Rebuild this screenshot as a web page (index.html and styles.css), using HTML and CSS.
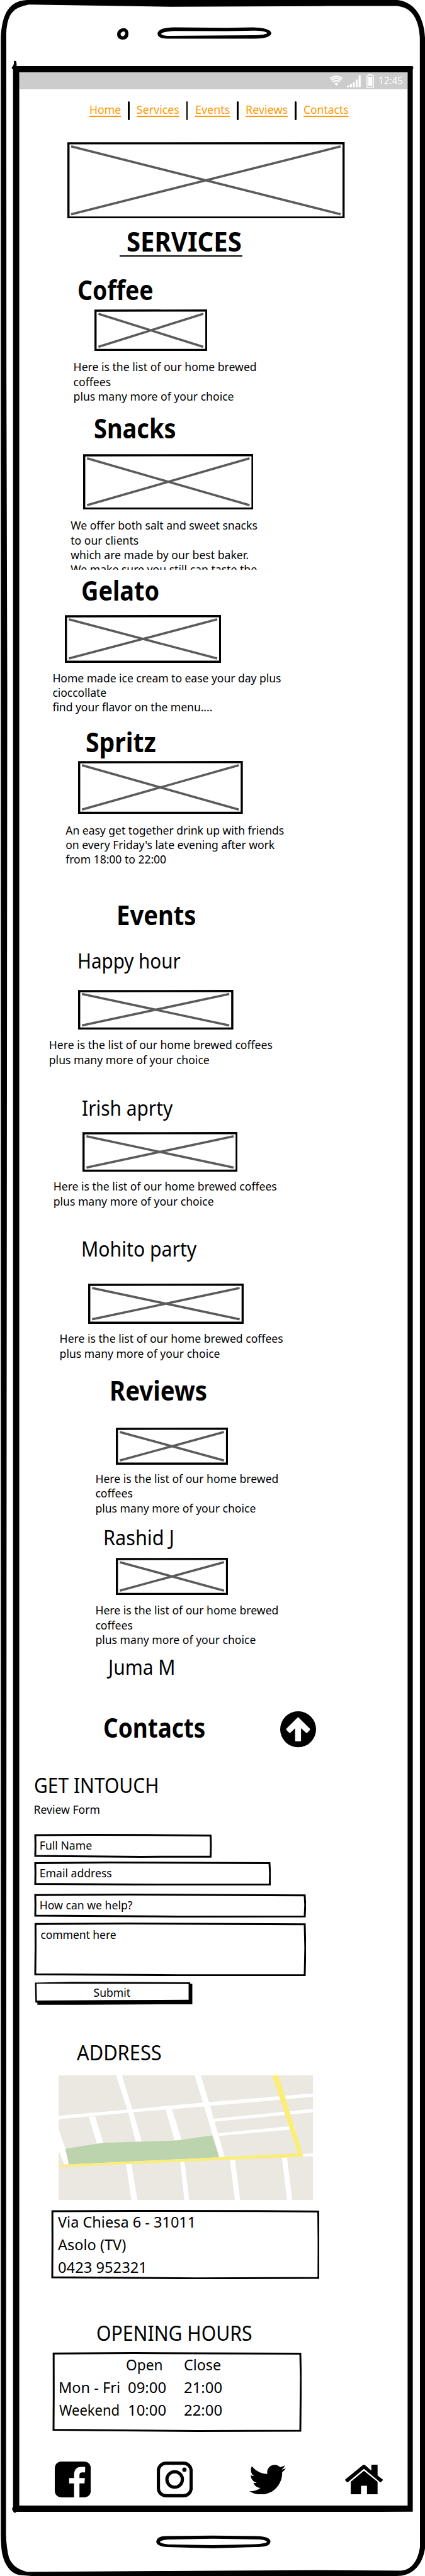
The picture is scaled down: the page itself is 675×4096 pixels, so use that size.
FILE: index.html
```html
<!DOCTYPE html>
<html lang="en">
<head>
<meta charset="utf-8">
<title>Services</title>
<link rel="stylesheet" href="styles.css">
</head>
<body>
<div class="phone">
<svg class="frame" viewBox="0 0 675 4096" aria-hidden="true">
  <path fill-rule="evenodd" d="M43 0H630C655 2 673 22 675 60V4052C671 4078 656 4096 630 4096H50L32 4094.5C15 4092 6 4075 3 4058Q1.5 4048 1.3 4030V60C3 20 16 1 43 0ZM46 7.2C22 12 12 20 10 52L10.2 600L11.5 1100L10.5 2300L9.8 3500L9.6 4030Q10 4050 14 4066C19 4080 30 4086 43 4089.5L270 4088L500 4086.7L637 4087.5C655 4086 664 4070 667 4050L666.8 60C665 25 650 11 630 9.6H520L271 10.8Z"/>
  <path fill-rule="evenodd" d="M20.7 105L22 101.500L22 98Q23.500 95 26 98L26.500 105H655Q657.500 107 655.600 110.500V3993.800L600 3994H26Q23.500 3997 21.500 3994Q17.500 3990 20.700 3986V110.500Q16.500 107.500 20.700 105ZM30.600 114.900V3983.900H647.400V114.900Z"/>
  <path fill-rule="evenodd" d="M280 43.500L360 44.300L402 43.500C424 44 431 49 431 53C430 58 421 61.500 404 61.500H268C253 62 250 57 250.300 53C251 46 263 43.500 280 43.500ZM278 49.300C264 50 256 52 256 54C257 56 262 57 268 57L402 56C416 56 424 54 424.500 52.700C423 50 414 49 402 48.800L360 49.600Z"/>
  <path fill-rule="evenodd" d="M196.500 44.800C201.500 45 204.300 49 204 54C203.600 60 200.500 63 195 63C189 63 186 59.500 186 54C186.300 49 191 45 196.500 44.800ZM196.500 50C193.500 50.500 191.500 52 191.500 54.500C192 57 194 58 195.500 57.700C197.500 57 199 54.500 199 53C198.500 51 198 50 196.500 50Z"/>
  <path fill-rule="evenodd" d="M262 4032.600L338 4031.800L408 4032.600C424 4033 430 4037 429.500 4042C428 4048 422 4050 404 4050L338 4052L266 4050C252 4049 248 4045 248.300 4041C249 4036 253 4033 262 4032.600ZM266 4038C258 4039 254 4040.500 254 4042C256 4044 262 4045.500 270 4045.800L338 4047L404 4045.500C416 4045 424 4043.500 424 4041.500C422 4039 416 4037.800 406 4037.800L338 4036.800Z"/>
</svg>

<div class="screen">
  <div class="statusbar">
    <svg class="wifi" viewBox="0 0 22 17"><path d="M11 16.500L8 13Q11 10.500 14 13Z"/><path class="wave" d="M5.500 10.500Q11 5.800 16.500 10.500M3.300 7.700Q11 1.200 18.700 7.700M1.200 4.800Q11-2 20.800 4.800"/></svg>
    <svg class="signal" viewBox="0 0 22 19"><path d="M0 16h3.200v2.800H0zM4.700 13.500h3.200v5.300H4.700zM9.300 11h3.200v7.800H9.300zM13.900 6.500h3.200v12.300H13.900zM18.600 0h3.200v18.800H18.600z"/></svg>
    <svg class="battery" viewBox="0 0 12 21.500"><path class="shell" d="M3.500 2.200V.8H8.500V2.200H10.200Q11.200 2.200 11.200 3.500V20.700H.8V3.500Q.8 2.200 1.800 2.200Z"/><path d="M2.700 4H9.300V18.800H2.700Z"/></svg>
    <span class="time">12:45</span>
  </div>

  <nav class="nav">
    <a class="l-home">Home</a><i></i><a class="l-services">Services</a><i></i><a class="l-events">Events</a><i></i><a class="l-reviews">Reviews</a><i></i><a class="l-contacts">Contacts</a>
  </nav>

  <svg class="pic hero" viewBox="0 0 440.400 121.700"><path class="x" d="M6 6.800L434 114.800M6 114.800L434 6.800"/><path class="edge" d="M1.700 1.900L438.700 1.700V120H1.700Z"/></svg>
  <div class="title"><h1>SERVICES</h1></div>

  <section class="item coffee">
    <h2>Coffee</h2>
    <svg class="pic" viewBox="0 0 179.500 66.100"><path class="x" d="M6.300 7L172.800 59.500M6.300 59.500L172.800 7"/><path class="edge" d="M1.700 2L177.800 1.700V64.400H1.700Z"/></svg>
    <p>Here is the list of our home brewed<br>coffees<br>plus many more of your choice</p>
  </section>

  <section class="item snacks">
    <h2>Snacks</h2>
    <svg class="pic" viewBox="0 0 270.800 88.300"><path class="x" d="M6.300 6.800L264.300 81.300M6.300 81.300L264.300 6.800"/><path class="edge" d="M1.700 2L269.100 1.700V86.600H1.700Z"/></svg>
    <p>We offer both salt and sweet snacks<br>to our clients<br>which are made by our best baker.<br>We make sure you still can taste the</p>
  </section>

  <section class="item gelato">
    <h2>Gelato</h2>
    <svg class="pic" viewBox="0 0 248.400 75.900"><path class="x" d="M6.300 6.800L241.900 69M6.300 69L241.900 6.800"/><path class="edge" d="M1.700 2L246.700 1.700V74.200H1.700Z"/></svg>
    <p>Home made ice cream to ease your day plus<br>cioccollate<br>find your flavor on the menu....</p>
  </section>

  <section class="item spritz">
    <h2>Spritz</h2>
    <svg class="pic" viewBox="0 0 261.700 84.200"><path class="x" d="M6.300 6.800L255.200 77.300M6.300 77.300L255.200 6.800"/><path class="edge" d="M1.700 2L260 1.700V82.500H1.700Z"/></svg>
    <p>An easy get together drink up with friends<br>on every Friday's late evening after work<br>from 18:00 to 22:00</p>
  </section>

  <h2 class="events">Events</h2>

  <section class="item happy">
    <h3>Happy hour</h3>
    <svg class="pic" viewBox="0 0 246.600 63.100"><path class="x" d="M6.300 6.600L240.100 56.500M6.300 56.500L240.100 6.600"/><path class="edge" d="M1.700 2L244.900 1.700V61.400H1.700Z"/></svg>
    <p>Here is the list of our home brewed coffees<br>plus many more of your choice</p>
  </section>

  <section class="item irish">
    <h3>Irish aprty</h3>
    <svg class="pic" viewBox="0 0 246.600 63.100"><path class="x" d="M6.300 6.600L240.100 56.500M6.300 56.500L240.100 6.600"/><path class="edge" d="M1.700 2L244.900 1.700V61.400H1.700Z"/></svg>
    <p>Here is the list of our home brewed coffees<br>plus many more of your choice</p>
  </section>

  <section class="item mohito">
    <h3>Mohito party</h3>
    <svg class="pic" viewBox="0 0 247.100 63.900"><path class="x" d="M6.300 7L240.600 56.800M6.300 56.800L240.600 7"/><path class="edge" d="M1.700 2L245.400 1.700V62.200H1.700Z"/></svg>
    <p>Here is the list of our home brewed coffees<br>plus many more of your choice</p>
  </section>

  <h2 class="reviews">Reviews</h2>

  <section class="item rashid">
    <svg class="pic" viewBox="0 0 178.300 59"><path class="x" d="M6.300 7L171.700 52.200M6.300 52.200L171.700 7"/><path class="edge" d="M1.700 2L176.600 1.700V57.300H1.700Z"/></svg>
    <p>Here is the list of our home brewed<br>coffees<br>plus many more of your choice</p>
    <h3>Rashid J</h3>
  </section>

  <section class="item juma">
    <svg class="pic" viewBox="0 0 178.300 59.100"><path class="x" d="M6.300 7L171.700 52.200M6.300 52.200L171.700 7"/><path class="edge" d="M1.700 2L176.600 1.700V57.400H1.700Z"/></svg>
    <p>Here is the list of our home brewed<br>coffees<br>plus many more of your choice</p>
    <h3>Juma M</h3>
  </section>

  <div class="contacts">
    <h2>Contacts</h2>
    <svg class="up" viewBox="0 0 57 57.300"><ellipse cx="28.500" cy="28.650" rx="28.500" ry="28.650"/><path class="hole" d="M28.400 9.300L47 27.500Q48 29 47 30L43 34.200Q42 35 41 34L33.100 27V46.500Q33 47.700 31.800 47.700H25Q23.700 47.700 23.700 46.500V27L16.500 34Q15.300 35 14.200 34L10 30Q9 28.800 10 27.500Z"/></svg>
  </div>

  <h3 class="touch">GET INTOUCH</h3>
  <p class="formname">Review Form</p>
  <form class="form">
    <div class="field name"><svg viewBox="0 0 282.400 37.700"><path d="M2 2L90 1.500L180 1.700L280.500 2.800L281 18L280.500 36.200L170 36.400L2 35L2.300 18Z"/></svg><span>Full Name</span></div>
    <div class="field mail"><svg viewBox="0 0 376.300 38.300"><path d="M2 2.400L120 1.500L374 2.600L374.800 18L374.500 36.600L200 36.800L2 35.400L2.300 18Z"/></svg><span>Email address</span></div>
    <div class="field help"><svg viewBox="0 0 432.200 38.300"><path d="M2 2.200L150 1.600L430 2.800L430.800 18L430 36.300L230 36.500L2 35L2.300 18Z"/></svg><span>How can we help?</span></div>
    <div class="field comment"><svg viewBox="0 0 432.200 85.300"><path d="M2.400 2.200L150 1.600L430 2.800L430.900 40L430 83.500L230 83.700L2 82.300L2.500 40Z"/></svg><span>comment here</span></div>
    <div class="field submit"><svg viewBox="0 0 250.500 36.700"><path class="solid" fill-rule="evenodd" d="M.5 1.500L60 .3L247.100 1V3.300H250.500V35.900L70 36.700H4.300V33.200H1.200ZM3 3.200L3.600 30L120 29.200L244.600 28.800V3.700Z"/></svg><span>Submit</span></div>
  </form>

  <h3 class="address">ADDRESS</h3>
  <svg class="map" viewBox="215 323 939 701" preserveAspectRatio="none">
    <path fill="#ebe8e1" d="M215 323H1154V1024H215Z"/>
    <g fill="#fff">
      <path d="M427 323H449L487 512L522 696H500L472 534L469 516Z"/>
      <path d="M717 323H740L774 495L828 782H808L766 570L748 478Z"/>
      <path d="M215 551L470 516L760 474L1154 425V443L775 495L480 532L215 570Z"/>
      <path d="M326 556L350 554L380 703L357 708ZM610 514L633 511L669 687L643 690Z"/>
      <path d="M215 622L240 736L253 824L236 825L215 745Z"/>
      <path d="M788 567L1154 512V531L790 583ZM804 648L1087 606V626L808 664Z"/>
      <path d="M1115 766L1154 762V778L1115 780ZM464 823L484 822L506 1024H484ZM664 811H680L697 1024H679ZM847 800L866 798L885 1024H866ZM1039 787L1058 785L1077 1024H1058Z"/>
    </g>
    <path fill="#bbd4ad" d="M240 736L380 703L650 690L782 661L808 784L253 824Z"/>
    <path fill="#faee79" d="M1003 323H1027L1118 781L850 798L217 839V827L808 784L1098 762Z"/>
  </svg>
  <div class="card addr">
    <svg viewBox="0 0 426.600 110.100"><path d="M2.200 2L130 1.500L330 1.700L424.500 2.500L425 50L424.800 108L230 108.700L2 107L2.300 55Z"/></svg>
    <span class="a1">Via Chiesa 6 - 31011</span><span class="a2">Asolo (TV)</span><span class="a3">0423 952321</span>
  </div>

  <h3 class="opening">OPENING HOURS</h3>
  <div class="card hours">
    <svg viewBox="0 0 396 126.900"><path d="M2.200 2.300L130 1.500L394 2.500L394.800 40L394 125L230 125.500L2 123.500L2.300 70Z"/></svg>
    <div class="table">
      <span></span><span class="t-open">Open</span><span class="t-close">Close</span>
      <span class="t-mon">Mon - Fri</span><span class="t-time">09:00</span><span class="t-time">21:00</span>
      <span class="t-week">Weekend</span><span class="t-time">10:00</span><span class="t-time">22:00</span>
    </div>
  </div>

  <footer class="social">
    <svg class="fb" viewBox="0 0 57.200 57"><rect width="57.200" height="57" rx="10"/><path class="hole" d="M30.600 57V34.800H22.800V26.300H30.600V21C30.600 13 35 8.500 42 8.500H48.200V17.300H43.500C40.500 17.300 39.200 19 39.200 21.500V26.300H47.800L47.200 34.800H39.200V57Z"/></svg>
    <svg class="ig" viewBox="0 0 57.200 57"><rect class="ring" x="2.600" y="2.600" width="52" height="51.800" rx="12"/><circle class="ring" cx="28.400" cy="28.500" r="12.300"/><circle cx="43.900" cy="12.900" r="3.400"/></svg>
    <svg class="tw" viewBox="0 48 512 416"><path d="M459.370 151.716c.325 4.548.325 9.097.325 13.645 0 138.720-105.583 298.558-298.558 298.558-59.452 0-114.680-17.219-161.137-47.106 8.447.974 16.568 1.299 25.340 1.299 49.055 0 94.213-16.568 130.274-44.832-46.132-.975-84.792-31.188-98.112-72.772 6.498.974 12.995 1.624 19.818 1.624 9.421 0 18.843-1.300 27.614-3.573-48.081-9.747-84.143-51.980-84.143-102.985v-1.299c13.969 7.797 30.214 12.670 47.431 13.319-28.264-18.843-46.781-51.005-46.781-87.391 0-19.492 5.197-37.360 14.294-52.954 51.655 63.675 129.300 105.258 216.365 109.807-1.624-7.797-2.599-15.918-2.599-24.040 0-57.828 46.782-104.934 104.934-104.934 30.213 0 57.502 12.670 76.670 33.137 23.715-4.548 46.456-13.320 66.599-25.340-7.798 24.366-24.366 44.833-46.132 57.827 21.117-2.273 41.584-8.122 60.426-16.243-14.292 20.791-32.161 39.308-52.628 54.253z"/></svg>
    <svg class="house" viewBox="0 0 60.200 47.600"><path d="M28.500.6Q30 -.5 31.500.6L41.800 9.500V1Q41.800 0 43 0H50.700Q51.700 0 51.700 1V17.300L59.600 23.300Q60.600 24.200 59.800 25L57.500 27.600Q56.400 28.500 55.200 27.600L30 6.500L5 27.600Q3.900 28.500 2.800 27.600L.4 25Q-.3 24 .6 23.300Z"/><path d="M30 9.700L51.700 27.300V46.600Q51.700 47.600 50.700 47.600H34.900V33.400H25.400V47.600H10Q9 47.600 9 46.600V27.300Z"/></svg>
  </footer>
</div>
</div>
</body>
</html>
```

FILE: styles.css
```css
* { box-sizing: border-box; }
body { margin: 0; background: #fff; color: #000; font: 17.6px/23.4px "Noto Sans", "Open Sans", sans-serif; }
h1, h2, h3, p { margin: 0; white-space: nowrap; font-weight: 400; }
svg { display: block; }

.phone { position: relative; width: 675px; height: 4096px; overflow: hidden; }
.frame { position: absolute; left: 0; top: 0; width: 675px; height: 4096px; }
.screen { position: relative; display: flex; flex-direction: column; align-items: flex-start; padding-top: 114.9px; }
.screen > *, .item > * { flex: none; }

h1, h2 { font-size: 43.4px; line-height: 52px; height: 50px; font-weight: 700; transform-origin: 0 0; }
h3 { font-size: 32.6px; line-height: 41.6px; height: 40px; transform-origin: 0 0; }

.statusbar { align-self: stretch; display: flex; height: 27.6px; margin: 0 27.6px 0 30.6px; background: #ccc; fill: #fff; color: #fff; }
.wifi { width: 22.3px; height: 17px; margin: 5.2px 0 0 492.9px; }
.wifi .wave { fill: none; stroke: #fff; stroke-width: 2.2; }
.signal { width: 22px; height: 19px; margin: 4.7px 0 0 4.8px; }
.battery { width: 12px; height: 21.5px; margin: 3.4px 0 0 9.6px; }
.battery .shell { fill: none; stroke: #fff; stroke-width: 1.4; }
.time { margin: 1.5px 0 0 7px; font-size: 15.8px; line-height: 24px; transform: scaleX(.965); transform-origin: 0 0; }

.nav { display: flex; gap: 11.1px; height: 83.1px; padding: 16.8px 0 0 142px; line-height: 30.4px; color: #ff9900; }
.nav a { white-space: nowrap; text-decoration: underline; text-decoration-thickness: 1.6px; text-underline-offset: 2.6px; text-decoration-skip-ink: none; transform-origin: 0 0; }
.nav i { width: 2.6px; height: 29.8px; margin-top: 1.5px; background: #000; border-radius: 1.5px; }
.l-home { width: 50px; }
.l-services { width: 68px; transform: scaleX(1.01); }
.l-events { width: 55.5px; transform: scaleX(1.02); }
.l-reviews { width: 67.4px; transform: scaleX(1.02); }
.l-contacts { width: 71.5px; transform: scaleX(.992); }

.pic .x { fill: none; stroke: #5b5b5d; stroke-width: 3.6; }
.pic .edge { fill: none; stroke: #000; stroke-width: 3.4; }
.hero { width: 440.4px; height: 121.7px; margin-left: 107.2px; }
.title { width: 195.1px; height: 50.1px; margin: 10.7px 0 0 189.8px; padding-left: 11.6px; border-bottom: 2.8px solid #000; }
.title h1 { transform: scaleX(.924); }

.coffee h2 { margin: 27.3px 0 0 123.4px; transform: scaleX(.86); }
.coffee .pic { width: 179.5px; height: 66.1px; margin: 7.1px 0 0 149.8px; }
.coffee p { margin: 13.7px 0 -.5px 116.6px; }

.snacks h2 { margin: 13.2px 0 0 149px; transform: scaleX(.875); }
.snacks .pic { width: 270.8px; height: 88.3px; margin: 16.9px 0 0 131.7px; }
.snacks p { height: 81.8px; margin: 13.8px 0 0 112.2px; overflow: hidden; }

.gelato h2 { margin: 6.7px 0 0 128.7px; transform: scaleX(.873); }
.gelato .pic { width: 248.4px; height: 75.9px; margin: 15.3px 0 0 102.9px; }
.gelato p { margin: 12.8px 0 -.5px 83.4px; letter-spacing: -.06px; }

.spritz h2 { margin: 17.3px 0 0 136.4px; transform: scaleX(.902); }
.spritz .pic { width: 261.7px; height: 84.2px; margin: 6.7px 0 0 124px; }
.spritz p { margin: 14.1px 0 -.5px 104.2px; letter-spacing: -.04px; }

.events { margin: 50.4px 0 0 185px; transform: scaleX(.88); }
.happy p, .irish p, .mohito p { line-height: 23.8px; }

.happy h3 { margin: 28.4px 0 0 123.1px; transform: scaleX(.908); }
.happy .pic { width: 246.6px; height: 63.1px; margin: 27.2px 0 0 124px; }
.happy p { margin: 12.5px 0 -.5px 77.8px; }

.irish h3 { margin: 43.7px 0 0 129.6px; transform: scaleX(.917); }
.irish .pic { width: 246.6px; height: 63.2px; margin: 19px 0 0 130.9px; }
.irish p { margin: 12.5px 0 -.5px 84.7px; }

.mohito h3 { margin: 42.2px 0 0 128.8px; transform: scaleX(.926); }
.mohito .pic { width: 247.1px; height: 63.9px; margin: 36.8px 0 0 140.3px; }
.mohito p { margin: 12.1px 0 -.5px 94.6px; }

.reviews { margin: 20.7px 0 0 174px; transform: scaleX(.885); }
.rashid .pic { width: 178.3px; height: 59px; margin: 34.7px 0 0 184.2px; }
.rashid p { margin: 11.2px 0 -.5px 151.4px; }
.rashid h3 { margin: 14.1px 0 0 164px; transform: scaleX(.94); }
.juma .pic { width: 178.3px; height: 59.1px; margin: 13.5px 0 0 184.2px; }
.juma p { margin: 12.9px 0 -.5px 151.4px; }
.juma h3 { margin: 11px 0 0 172px; transform: scaleX(.92); }

.contacts { display: flex; justify-content: space-between; width: 338.1px; height: 58.1px; margin: 50.6px 0 0 164.4px; }
.contacts h2 { width: 200px; transform: scaleX(.85); }
.up { width: 57px; height: 57.3px; margin-top: .8px; }
.hole { fill: #fff; }

.touch { margin: 39.3px 0 0 53.5px; transform: scaleX(.92); }
.formname { margin: 7.7px 0 -.5px 53.5px; }
.form { display: flex; flex-direction: column; margin: 27.4px 0 0 54.2px; }
.field, .card { position: relative; white-space: nowrap; }
.field svg, .card svg { position: absolute; left: 0; top: 0; width: 100%; height: 100%; }
.field path, .card path { fill: none; stroke: #000; stroke-width: 3; }
.field path.solid { fill: #000; stroke: none; }
.field span, .card span { position: relative; display: block; transform-origin: 0 0; }
.field { padding: 6.6px 0 0 8.6px; }
.name { width: 282.4px; height: 37.7px; }
.mail { width: 376.3px; height: 38.3px; margin-top: 6.3px; }
.help { width: 432.2px; height: 38.3px; margin-top: 13.1px; }
.comment { width: 432.2px; height: 85.3px; margin-top: 7.4px; padding: 7.7px 0 0 10.2px; }
.comment span { letter-spacing: -.1px; }
.submit { width: 250.5px; height: 36.7px; margin: 9px 0 0 .9px; padding: 5.3px 5px 0 0; text-align: center; }

.address { margin: 54.6px 0 0 122.3px; transform: scaleX(.945); }
.map { width: 404.2px; height: 197.9px; margin: 17.5px 0 0 92.6px; }
.card { font-size: 24.4px; }
.addr { width: 426.6px; height: 110.1px; margin: 15.5px 0 0 80.5px; padding: 1.6px 0 0 11px; line-height: 36.1px; }
.a1, .a2 { transform: scaleX(.964); }
.a3 { transform: scaleX(.973); }

.opening { margin: 65.6px 0 0 153px; transform: scaleX(.925); }
.hours { width: 396px; height: 126.9px; margin: 11px 0 0 83.1px; padding: 1.7px 0 0 9.6px; line-height: 36px; }
.table { display: grid; grid-template-columns: 110.5px 89.3px 80px; grid-auto-rows: 36px; }
.table .t-open { margin-left: -3.2px; transform: scaleX(.93); }
.t-close { transform: scaleX(.955); }
.t-mon { transform: scaleX(.965); }
.table .t-week { margin-left: 1.6px; transform: scaleX(.902); }
.t-time { transform: scaleX(.98); }

.social { display: flex; align-items: flex-start; height: 57px; margin: 47px 0 0 87px; }
.fb, .ig { width: 57.2px; height: 57px; }
.ig { margin-left: 104.6px; }
.ring { fill: none; stroke: #000; stroke-width: 5.1; }
.tw { width: 58.1px; height: 47.6px; margin: 4.5px 0 0 90.5px; }
.house { width: 60.2px; height: 47.6px; margin: 4.5px 0 0 93px; }
```
